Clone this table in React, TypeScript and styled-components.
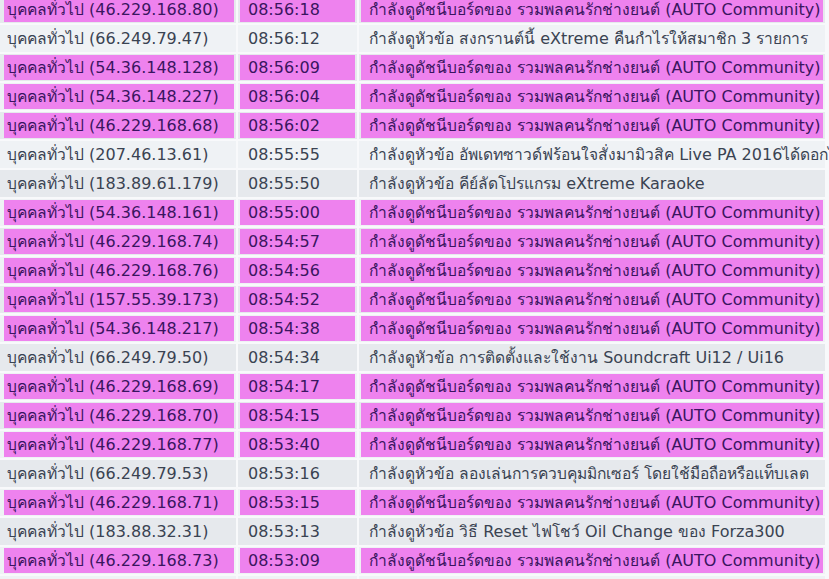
import React from "react";
import styled, { createGlobalStyle } from "styled-components";

const Global = createGlobalStyle`
  html, body { margin: 0; padding: 0; background: #f8f9fb; overflow: hidden; }
  body { font-family: "DejaVu Sans", Tahoma, "Noto Sans", sans-serif; }
`;

const Table = styled.div`
  display: flex;
  flex-direction: column;
  gap: 2px;
  width: 829px;
  margin: -4px 0 0 -2px;
`;

const Row = styled.div`
  display: grid;
  grid-template-columns: 238px 119px 466px;
  column-gap: 2px;
  height: 27px;
`;

const Cell = styled.div<{ $light: boolean; $first?: boolean }>`
  background: ${(p) => (p.$light ? "#eff2f5" : "#e6e9ed")};
  padding: 1px 2px 1px ${(p) => (p.$first ? "6px" : "2px")};
  display: flex;
  min-width: 0;
`;

const Content = styled.div<{ $hl: boolean; $first?: boolean }>`
  flex: 1;
  display: flex;
  align-items: center;
  padding-left: ${(p) => (p.$first ? "3px" : "8px")};
  background: ${(p) => (p.$hl ? "#ee82ee" : "transparent")};
  color: ${(p) => (p.$hl ? "#3a1560" : "#3a4352")};
  font-size: 16px;
  white-space: pre;
  overflow: visible;
`;

const Thai = styled.span`
  font-family: "DejaVu Sans", sans-serif;
  font-size: 15.6px;
`;

const Latin = styled.span`
  font-family: "DejaVu Sans", "Noto Sans", sans-serif;
  font-size: 16px;
`;

function Mixed({ text }: { text: string }) {
  const parts = text.split(/([\u0E00-\u0E7F]+)/).filter((s) => s.length > 0);
  return (
    <>
      {parts.map((s, i) =>
        /[\u0E00-\u0E7F]/.test(s) ? <Thai key={i}>{s}</Thai> : <Latin key={i}>{s}</Latin>
      )}
    </>
  );
}

type Entry = [string, string, string | null];

const AUTO = "กำลังดูดัชนีบอร์ดของ รวมพลคนรักช่างยนต์ (AUTO Community)";

const rows: Entry[] = [
  ["46.229.168.80", "08:56:18", null],
  ["66.249.79.47", "08:56:12", "กำลังดูหัวข้อ สงกรานต์นี้ eXtreme คืนกำไรให้สมาชิก 3 รายการ"],
  ["54.36.148.128", "08:56:09", null],
  ["54.36.148.227", "08:56:04", null],
  ["46.229.168.68", "08:56:02", null],
  ["207.46.13.61", "08:55:55", "กำลังดูหัวข้อ อัพเดทซาวด์ฟร้อนใจสั่งมามิวสิค Live PA 2016ได้ดอกไม้"],
  ["183.89.61.179", "08:55:50", "กำลังดูหัวข้อ คีย์ลัดโปรแกรม eXtreme Karaoke"],
  ["54.36.148.161", "08:55:00", null],
  ["46.229.168.74", "08:54:57", null],
  ["46.229.168.76", "08:54:56", null],
  ["157.55.39.173", "08:54:52", null],
  ["54.36.148.217", "08:54:38", null],
  ["66.249.79.50", "08:54:34", "กำลังดูหัวข้อ การติดตั้งและใช้งาน Soundcraft Ui12 / Ui16"],
  ["46.229.168.69", "08:54:17", null],
  ["46.229.168.70", "08:54:15", null],
  ["46.229.168.77", "08:53:40", null],
  ["66.249.79.53", "08:53:16", "กำลังดูหัวข้อ ลองเล่นการควบคุมมิกเซอร์ โดยใช้มือถือหรือแท็บเลต"],
  ["46.229.168.71", "08:53:15", null],
  ["183.88.32.31", "08:53:13", "กำลังดูหัวข้อ วิธี Reset ไฟโชว์ Oil Change ของ Forza300"],
  ["46.229.168.73", "08:53:09", null],
];

export default function App() {
  return (
    <>
      <Global />
      <Table>
        {rows.map(([ip, time, text], i) => {
          const hl = text === null;
          const light = i % 2 === 1;
          return (
            <Row key={ip + time}>
              <Cell $light={light} $first>
                <Content $hl={hl} $first>
                  <Mixed text={`บุคคลทั่วไป (${ip})`} />
                </Content>
              </Cell>
              <Cell $light={light}>
                <Content $hl={hl}>
                  <Latin>{time}</Latin>
                </Content>
              </Cell>
              <Cell $light={light}>
                <Content $hl={hl}>
                  <Mixed text={hl ? AUTO : (text as string)} />
                </Content>
              </Cell>
            </Row>
          );
        })}
        <Row>
          <Cell $light $first />
          <Cell $light />
          <Cell $light />
        </Row>
      </Table>
    </>
  );
}
